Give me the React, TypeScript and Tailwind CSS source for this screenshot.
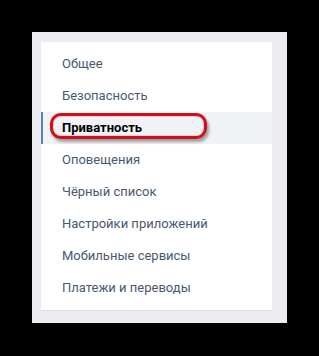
const items = [
  "Общее",
  "Безопасность",
  "Приватность",
  "Оповещения",
  "Чёрный список",
  "Настройки приложений",
  "Мобильные сервисы",
  "Платежи и переводы",
];

export default function App() {
  return (
    <div className="w-[319px] h-[356px] bg-black pt-8 pl-8 font-['Roboto',sans-serif]">
      <div className="w-[255px] h-[291px] bg-[#ebedf0] pt-[10px] pl-[9px]">
        <div className="w-[231px] bg-white py-[6px] shadow-[0_1px_0_0_#dce1e6]">
          {items.map((item) =>
            item === "Приватность" ? (
              <div
                key={item}
                className="relative h-8 flex items-center pl-[19px] bg-[#f0f2f5] border-l-2 border-[#5181b8] text-[13px] font-bold text-black"
              >
                <span className="relative z-10">{item}</span>
                <div className="absolute left-[7px] top-[1px] w-[157px] h-[26px] rounded-[11px] border-[3px] border-[#d10f1b] shadow-[2px_3px_3px_rgba(0,0,0,0.35),inset_0_0_0_1px_#f3d4d6]" />
              </div>
            ) : (
              <div
                key={item}
                className="h-8 flex items-center pl-[21px] text-[13px] text-[#48596d]"
              >
                {item}
              </div>
            )
          )}
        </div>
      </div>
    </div>
  );
}
